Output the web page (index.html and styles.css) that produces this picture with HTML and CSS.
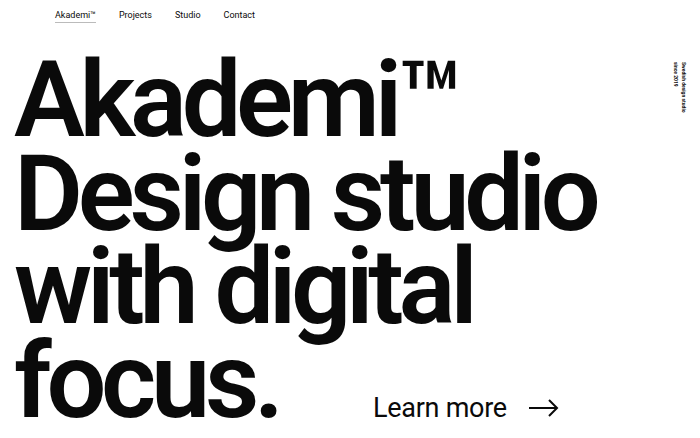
FILE: index.html
```html
<!DOCTYPE html>
<html lang="en">
<head>
    <meta charset="UTF-8">
    <meta name="viewport" content="width=device-width, initial-scale=1.0">
    <title>Akademi™ Design studio</title>
    <link rel="stylesheet" href="styles.css">
</head>
<body>
    <header class="site-header">
        <nav class="nav">
            <a href="#" class="nav-link active">Akademi™</a>
            <a href="#" class="nav-link">Projects</a>
            <a href="#" class="nav-link">Studio</a>
            <a href="#" class="nav-link">Contact</a>
        </nav>
    </header>

    <main class="hero">
        <div class="hero-main">
            <h1 class="hero-title">Akademi™<br>Design studio<br>with digital</h1>
            <div class="hero-foot">
                <span class="hero-title">focus.</span>
                <a href="#" class="learn-more">
                    Learn more
                    <svg class="arrow" width="30" height="18" viewBox="0 0 30 18" fill="none" stroke="currentColor" stroke-width="2">
                        <path d="M0 9 H28"/>
                        <path d="M20 1 L28 9 L20 17"/>
                    </svg>
                </a>
            </div>
        </div>
        <aside class="hero-side">Swedish design studio<br>since 2019</aside>
    </main>
</body>
</html>
```

FILE: styles.css
```css
* {
    box-sizing: border-box;
    margin: 0;
    padding: 0;
}

body {
    font-family: Roboto, 'Liberation Sans', Arial, sans-serif;
    background-color: #fff;
    color: #0a0a0a;
    width: 700px;
    height: 438px;
    overflow: hidden;
}

a {
    color: inherit;
    text-decoration: none;
}

.site-header {
    padding: 8px 0 0 55px;
    height: 30px;
}

.nav {
    display: flex;
    gap: 23px;
    font-size: 9px;
    line-height: 14px;
}

.nav-link.active {
    border-bottom: 1px solid #bbb;
}

.hero {
    display: flex;
    padding-left: 14px;
    margin-top: 24px;
}

.hero-main {
    flex: 1;
}

.hero-title {
    font-size: 106px;
    font-weight: 600;
    line-height: 93.5px;
    letter-spacing: -0.05em;
}

.hero-foot {
    display: grid;
    grid-template-columns: 359px auto;
    align-items: baseline;
}

.learn-more {
    display: flex;
    align-items: center;
    gap: 22px;
    font-size: 27px;
    font-weight: 400;
    letter-spacing: -0.01em;
}

.hero-side {
    writing-mode: vertical-rl;
    font-size: 5px;
    line-height: 8px;
    font-weight: 700;
    margin: 8px 12px 0 0;
}
```
